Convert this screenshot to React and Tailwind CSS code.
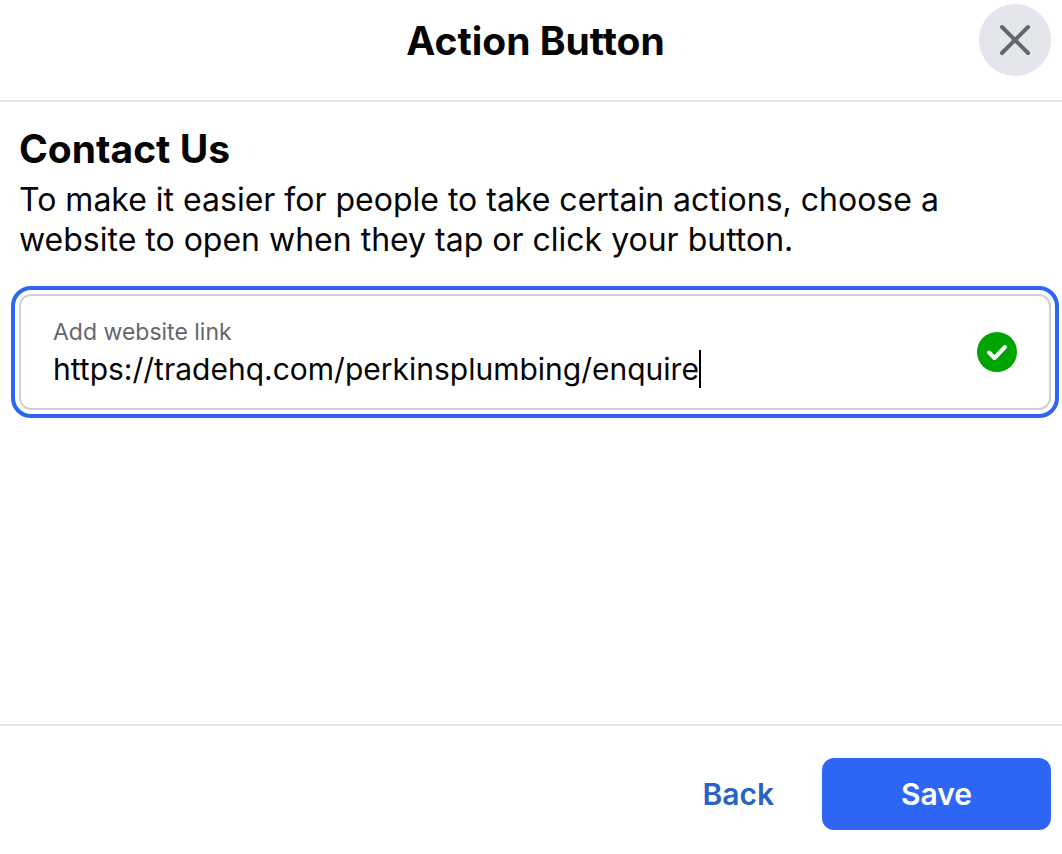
import { useState } from "react";

export default function App() {
  const [link, setLink] = useState("https://tradehq.com/perkinsplumbing/enquire");

  return (
    <div className="flex min-h-screen flex-col bg-white font-['Inter',sans-serif] text-[#050505]">
      <header className="grid grid-cols-[72px_1fr_72px] items-center border-b-2 border-[#e5e5e5] pt-1 pr-[11px] pb-6 pl-5">
        <h1 className="col-start-2 pt-0.5 text-center text-[39px] leading-[46px] font-bold">Action Button</h1>
        <button
          type="button"
          aria-label="Close"
          className="flex size-[72px] items-center justify-center rounded-full bg-[#e4e6eb]"
        >
          <svg viewBox="0 0 32 32" className="size-8" fill="none" stroke="#606770" strokeWidth="4" strokeLinecap="round">
            <path d="M3 3 29 29M29 3 3 29" />
          </svg>
        </button>
      </header>

      <main className="flex-1 pt-6 pr-[11px] pl-[19px]">
        <h2 className="text-[39px] leading-[46px] font-bold">Contact Us</h2>
        <p className="mt-2 text-[32px] leading-10">
          To make it easier for people to take certain actions, choose a website to open when they tap or click your
          button.
        </p>

        <div className="mt-[34px] flex h-[116px] items-center rounded-xl border-2 border-[#ced0d4] px-8 outline-4 outline-offset-4 outline-[#2d66f5]">
          <div className="flex min-w-0 flex-1 flex-col">
            <label htmlFor="website" className="text-[23px] leading-[34px] text-[#65676b]">
              Add website link
            </label>
            <div className="flex items-center">
              <input
                id="website"
                type="url"
                value={link}
                onChange={(e) => setLink(e.target.value)}
                className="field-sizing-content max-w-full text-[30px] leading-10 caret-transparent outline-none"
              />
              <span className="h-[38px] w-0.5 bg-black" />
            </div>
          </div>
          <svg viewBox="0 0 40 40" className="size-10" fill="none">
            <circle cx="20" cy="20" r="20" fill="#00a400" />
            <path d="M12 20.5 17.5 26 28 15" stroke="#fff" strokeWidth="4" strokeLinecap="round" strokeLinejoin="round" />
          </svg>
        </div>
      </main>

      <footer className="flex items-center justify-end gap-12 border-t-2 border-[#e5e5e5] pt-8 pr-[11px] pb-6">
        <button type="button" className="text-[30px] font-semibold text-[#2863c8]">
          Back
        </button>
        <button type="button" className="h-[72px] w-[229px] rounded-xl bg-[#2d66f5] text-[30px] font-semibold text-white">
          Save
        </button>
      </footer>
    </div>
  );
}
